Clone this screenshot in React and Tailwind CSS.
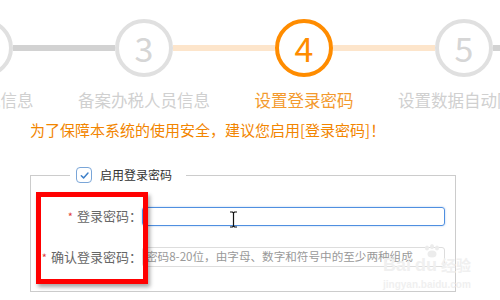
const steps = [
  { n: 2, label: "确认涉税信息", left: "bg-[#d2d2d2]", right: "bg-[#d2d2d2]", active: false },
  { n: 3, label: "备案办税人员信息", left: "bg-[#d2d2d2]", right: "bg-[#fde5cb]", active: false },
  { n: 4, label: "设置登录密码", left: "bg-[#fde5cb]", right: "bg-[#fde5cb]", active: true },
  { n: 5, label: "设置数据自动同步", left: "bg-[#fde5cb]", right: "bg-[#d2d2d2]", active: false },
  { n: 6, label: "完成", left: "bg-[#d2d2d2]", right: "bg-[#d2d2d2]", active: false },
];

function Step({ step }) {
  return (
    <div className="flex w-[160px] shrink-0 flex-col items-center">
      <div className="flex w-full items-center">
        <div className={`h-[6px] flex-1 ${step.left}`} />
        <div
          className={`flex h-[58px] w-[58px] items-center justify-center rounded-full border-[4px] text-[34px] leading-none ${
            step.active ? "border-[#ff8c00] text-[#ff8c00]" : "border-[#e0e0e0] text-[#d6d6d6]"
          }`}
        >
          {step.n}
        </div>
        <div className={`h-[6px] flex-1 ${step.right}`} />
      </div>
      <div
        className={`mt-[13px] whitespace-nowrap text-[16.5px] leading-[20px] ${
          step.active ? "text-[#f39a2e]" : "text-[#d0d0d0]"
        }`}
      >
        {step.label}
      </div>
    </div>
  );
}

export default function App() {
  return (
    <div className="relative h-[300px] w-[500px] overflow-hidden bg-white font-['Noto_Sans_CJK_SC',sans-serif]">
      {/* Steps */}
      <div className="ml-[-96px] flex pt-[19px]">
        {steps.map((s) => (
          <Step key={s.n} step={s} />
        ))}
      </div>

      <p className="mt-[10px] whitespace-nowrap pl-[30px] text-[15px] leading-[20px] text-[#f28500]">
        为了保障本系统的使用安全，建议您启用[登录密码]！
      </p>

      {/* Form */}
      <fieldset className="ml-[30px] mt-[27px] w-[426px] border border-[#cccccc] px-0 pb-[24px]">
        <legend className="ml-[39px] flex items-center pl-[6px] pr-[14px]">
          <span className="flex h-[16px] w-[16px] items-center justify-center rounded-[4px] border border-[#7aa6d8] bg-white">
            <svg width="11" height="11" viewBox="0 0 12 12" fill="none">
              <path d="M2.5 6.2 L5 8.6 L9.8 3.4" stroke="#3d7fc9" strokeWidth="1.6" strokeLinecap="round" strokeLinejoin="round" />
            </svg>
          </span>
          <span className="ml-[8px] text-[12px] leading-[16px] text-[#333]">启用登录密码</span>
        </legend>

        <div className="mt-[23px] flex items-center">
          <label className="w-[111px] whitespace-nowrap text-right text-[13px] leading-[19px] text-[#666]">
            <span className="mr-[4px] text-[11px] text-[#e03a3a]">*</span>登录密码：
          </label>
          <div className="h-[19px] w-[303px] rounded-[3px] border border-[#4f8fe0] shadow-[0_0_2px_rgba(79,143,224,0.5)]" />
        </div>

        <div className="mt-[21px] flex items-center">
          <label className="w-[111px] whitespace-nowrap text-right text-[13px] leading-[20px] text-[#666]">
            <span className="mr-[4px] text-[11px] text-[#e03a3a]">*</span>确认登录密码：
          </label>
          <div className="flex h-[20px] w-[303px] items-center overflow-hidden whitespace-nowrap rounded-[3px] border border-[#dddddd] pl-[3px] text-[11.6px] text-[#999]">
            密码8-20位，由字母、数字和符号中的至少两种组成
          </div>
        </div>
      </fieldset>

      {/* Annotation box */}
      <div className="absolute left-[36px] top-[192px] h-[92px] w-[112px] border-[5px] border-[#ff0000] shadow-[2px_3px_4px_rgba(0,0,0,0.35)]" />

      {/* Text cursor */}
      <svg className="absolute left-[229px] top-[211px]" width="9" height="17" viewBox="0 0 9 17">
        <path d="M1 1 H3.5 L4.5 2 L5.5 1 H8 M4.5 2 V15 M1 16 H3.5 L4.5 15 L5.5 16 H8" stroke="#111" strokeWidth="1.2" fill="none" />
      </svg>

      {/* Watermark */}
      <div className="pointer-events-none absolute left-[383px] top-[244px] text-[#f0f0f0]">
        <svg className="absolute left-[40px] top-[0px]" width="18" height="14" viewBox="0 0 18 14" fill="#ececec">
          <ellipse cx="4" cy="4" rx="2" ry="2.6" />
          <ellipse cx="9" cy="2.6" rx="2" ry="2.6" />
          <ellipse cx="14" cy="4" rx="2" ry="2.6" />
          <ellipse cx="9" cy="10" rx="4.5" ry="3.5" />
        </svg>
        <div className="flex items-end gap-[4px] pt-[12px] font-['Liberation_Sans',sans-serif] text-[18px] font-bold leading-[18px]">
          <span>Bai</span>
          <span>du</span>
          <span className="font-['Noto_Sans_CJK_SC',sans-serif] text-[15px] leading-[18px]">经验</span>
        </div>
        <div className="mt-[5px] font-['Liberation_Sans',sans-serif] text-[10px] font-bold leading-[12px]">
          jingyan.baidu.com
        </div>
      </div>
    </div>
  );
}
